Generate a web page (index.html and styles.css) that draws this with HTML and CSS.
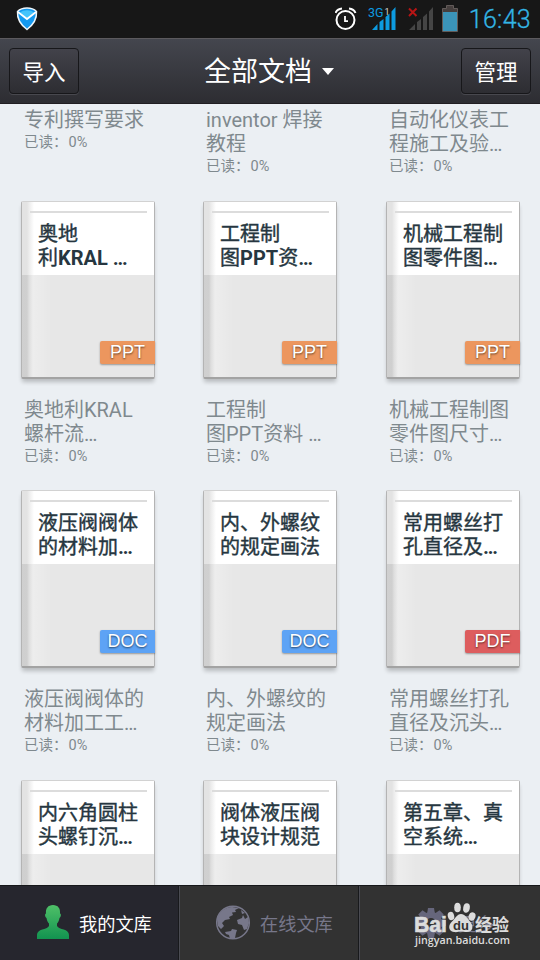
FILE: index.html
```html
<!DOCTYPE html>
<html lang="zh-CN">
<head>
    <meta charset="UTF-8">
    <meta name="viewport" content="width=device-width, initial-scale=1.0">
    <title>全部文档</title>
    <link rel="stylesheet" href="styles.css">
</head>
<body>
    <div class="status-bar">
        <svg class="shield" width="22" height="24" viewBox="0 0 22 24">
            <path d="M11 1 C14 1 18 2 20.5 4.5 C21 12 17 18 11 22.5 C5 18 1 12 1.5 4.5 C4 2 8 1 11 1Z" fill="#1499f0" stroke="#eef6fb" stroke-width="1.5"/>
            <path d="M4 5.5 C8 2.5 14 2.5 18 5.5 L11 11.5Z" fill="#45c4fb"/>
            <path d="M2 5 L11 12 L20 5" fill="none" stroke="#fff" stroke-width="1.8"/>
        </svg>
        <div class="status-icons">
            <svg width="22" height="24" viewBox="0 0 22 24" fill="none" stroke="#fff">
                <circle cx="10.5" cy="14" r="9" stroke-width="2"/>
                <path d="M0.500 7 C1.500 4.500 4 2.800 7 2.500 M20.500 7 C19.500 4.500 17 2.800 14 2.500" stroke-width="2"/>
                <path d="M10 10 V15.200 H13" stroke-width="1.800"/>
            </svg>
            <svg width="29" height="26" viewBox="0 0 29 26">
                <text x="0" y="11" class="net">3G</text>
                <text x="16.500" y="9" class="sim">1</text>
                <path d="M4 24 L9.500 18 V24Z M11.500 16 L15.500 13 V24 H11.500Z M17.500 11 L21.500 7.500 V24 H17.500Z M23.500 5.500 L27.500 1 V24 H23.500Z" fill="#0d9be0"/>
            </svg>
            <svg width="26" height="26" viewBox="0 0 26 26">
                <path d="M1 24 L7 18 V24Z M9 16 L13 13 V24 H9Z M15 11 L19 7.500 V24 H15Z M21 5.500 L25 1 V24 H21Z" fill="#454545"/>
                <path d="M1 2.500 L8.500 10 M8.500 2.500 L1 10" stroke="#b81414" stroke-width="2"/>
            </svg>
            <svg width="16" height="28" viewBox="0 0 16 28">
                <path d="M4.500 0.500 H11.500 V3.500 H15.500 V26.500 H0.500 V3.500 H4.500Z" fill="#463f3e" stroke="#625b59"/>
                <rect x="1" y="7" width="14" height="19" fill="#3b94b9"/>
            </svg>
            <span class="clock">16:43</span>
        </div>
    </div>

    <header class="header">
        <button class="btn">导入</button>
        <h1>全部文档 <span class="arrow"></span></h1>
        <button class="btn">管理</button>
    </header>

    <main class="shelf">
        <div class="row row-first">
            <div class="item">
                <div class="name">专利撰写要求</div>
                <div class="read">已读：<span>0%</span></div>
            </div>
            <div class="item">
                <div class="name">inventor 焊接<br>教程</div>
                <div class="read">已读：<span>0%</span></div>
            </div>
            <div class="item">
                <div class="name">自动化仪表工<br>程施工及验…</div>
                <div class="read">已读：<span>0%</span></div>
            </div>
        </div>

        <div class="row">
            <div class="item">
                <div class="book">
                    <div class="cover">奥地<br>利<b>KRAL …</b></div>
                    <span class="tag ppt">PPT</span>
                </div>
                <div class="name">奥地利KRAL<br>螺杆流…</div>
                <div class="read">已读：<span>0%</span></div>
            </div>
            <div class="item">
                <div class="book">
                    <div class="cover">工程制<br>图<b>PPT</b>资<b>…</b></div>
                    <span class="tag ppt">PPT</span>
                </div>
                <div class="name">工程制<br>图PPT资料 …</div>
                <div class="read">已读：<span>0%</span></div>
            </div>
            <div class="item">
                <div class="book">
                    <div class="cover">机械工程制<br>图零件图<b>…</b></div>
                    <span class="tag ppt">PPT</span>
                </div>
                <div class="name">机械工程制图<br>零件图尺寸…</div>
                <div class="read">已读：<span>0%</span></div>
            </div>
        </div>

        <div class="row">
            <div class="item">
                <div class="book">
                    <div class="cover">液压阀阀体<br>的材料加<b>…</b></div>
                    <span class="tag doc">DOC</span>
                </div>
                <div class="name">液压阀阀体的<br>材料加工工…</div>
                <div class="read">已读：<span>0%</span></div>
            </div>
            <div class="item">
                <div class="book">
                    <div class="cover">内、外螺纹<br>的规定画法</div>
                    <span class="tag doc">DOC</span>
                </div>
                <div class="name">内、外螺纹的<br>规定画法</div>
                <div class="read">已读：<span>0%</span></div>
            </div>
            <div class="item">
                <div class="book">
                    <div class="cover">常用螺丝打<br>孔直径及<b>…</b></div>
                    <span class="tag pdf">PDF</span>
                </div>
                <div class="name">常用螺丝打孔<br>直径及沉头…</div>
                <div class="read">已读：<span>0%</span></div>
            </div>
        </div>

        <div class="row">
            <div class="item">
                <div class="book">
                    <div class="cover">内六角圆柱<br>头螺钉沉<b>…</b></div>
                </div>
            </div>
            <div class="item">
                <div class="book">
                    <div class="cover">阀体液压阀<br>块设计规范</div>
                </div>
            </div>
            <div class="item">
                <div class="book">
                    <div class="cover">第五章、真<br>空系统<b>…</b></div>
                </div>
            </div>
        </div>
    </main>

    <nav class="tabs">
        <div class="tab active">
            <svg width="34" height="36" viewBox="0 0 34 36">
                <defs>
                    <linearGradient id="green" x1="0" y1="0" x2="0" y2="1">
                        <stop offset="0" stop-color="#4fc068"/>
                        <stop offset="1" stop-color="#129350"/>
                    </linearGradient>
                </defs>
                <path d="M17 0 C22 0 24.500 3.500 24 8.500 C25.500 9 25 12 23.500 13 C23 16 22 17.500 21 18.500 V21 C23 25 33 23.500 33 30 V34 H1 V30 C1 23.500 11 25 13 21 V18.500 C12 17.500 11 16 10.500 13 C9 12 8.500 9 10 8.500 C9.500 3.500 12 0 17 0Z" fill="url(#green)"/>
            </svg>
            <span>我的文库</span>
        </div>
        <div class="tab">
            <svg width="36" height="36" viewBox="0 0 36 36">
                <circle cx="18" cy="17.500" r="16.300" fill="none" stroke="#77778a" stroke-width="1.500"/>
                <path d="M2 14 C4 7 10 2 17 2 L24 3 L20 5 L21 7 L17 7.500 L18 10 L14 12 L15 14 L10 15 L7 18 L9 21 L6 24 L3 21Z M22 15 L27 13 L28 10 L30 14 L33 12 L34 18 L32 24 L29 25 L27 20 L23 19Z M10 27 L16 26 L17 24 L22 25 L21 28 L20 33 L15 34 L14 30 L11 29Z M26 5 L30 8 L27 9Z" fill="#77778a"/>
            </svg>
            <span>在线文库</span>
        </div>
        <div class="tab">
            <svg width="30" height="32" viewBox="-15 -16 30 32">
                <g fill="#66667c">
                    <path id="tooth" d="M-3 -15 H3 L4 -9 H-4Z"/>
                    <use href="#tooth" transform="rotate(45)"/>
                    <use href="#tooth" transform="rotate(90)"/>
                    <use href="#tooth" transform="rotate(135)"/>
                    <use href="#tooth" transform="rotate(180)"/>
                    <use href="#tooth" transform="rotate(225)"/>
                    <use href="#tooth" transform="rotate(270)"/>
                    <use href="#tooth" transform="rotate(315)"/>
                </g>
                <circle r="8" fill="none" stroke="#66667c" stroke-width="6"/>
            </svg>
            <span>更多</span>
        </div>
    </nav>

    <svg class="watermark" width="110" height="52" viewBox="0 0 110 52">
        <g fill="#dcdcdc">
            <text x="6" y="34" class="wm-logo" textLength="33" lengthAdjust="spacingAndGlyphs">Bai</text>
            <ellipse cx="43" cy="18" rx="3.200" ry="4.200" transform="rotate(-15 43 18)"/>
            <ellipse cx="49.500" cy="9.500" rx="3.300" ry="4.800"/>
            <ellipse cx="58.500" cy="10" rx="3.300" ry="4.700" transform="rotate(10 58.500 10)"/>
            <ellipse cx="64" cy="18.500" rx="3.400" ry="4.200" transform="rotate(20 64 18.500)"/>
            <path d="M53 16 C57 16 59 20 62 23.500 C66 28 65 34 59 34 C56 34 55 33.500 53 33.500 C51 33.500 49 34.500 46 34 C40 33 40 27 44 23.500 C47 21 49 16 53 16Z"/>
            <text x="45" y="32" class="wm-du">du</text>
            <text x="67" y="33" class="wm-cn" textLength="34" lengthAdjust="spacingAndGlyphs">经验</text>
            <text x="7" y="46" class="wm-url" textLength="95" lengthAdjust="spacingAndGlyphs">jingyan.baidu.com</text>
        </g>
    </svg>
</body>
</html>
```

FILE: styles.css
```css
* {
    box-sizing: border-box;
}
body {
    margin: 0;
    width: 540px;
    height: 960px;
    display: flex;
    flex-direction: column;
    overflow: hidden;
    font-family: Roboto, "Noto Sans CJK SC", sans-serif;
    background: #ebeff3;
}

/* status bar */
.status-bar {
    height: 38px;
    flex: none;
    display: flex;
    justify-content: space-between;
    padding: 0 9px 0 16px;
    background: #171717;
}
.shield {
    margin-top: 7px;
}
.status-icons {
    display: flex;
    align-items: flex-start;
}
.status-icons svg {
    margin: 6px 11px 0 0;
}
.status-icons svg:nth-child(3) {
    margin-right: 8px;
}
.status-icons svg:nth-child(4) {
    margin-top: 5px;
}
.net {
    font-size: 12.5px;
    fill: #0d9be0;
}
.sim {
    font-size: 9px;
    fill: #ddd;
}
.clock {
    font-size: 25px;
    font-weight: 300;
    line-height: 40px;
    letter-spacing: 0.3px;
    color: #33b5e5;
    -webkit-text-stroke: 0.3px #33b5e5;
}

/* header */
.header {
    height: 66px;
    flex: none;
    display: flex;
    justify-content: space-between;
    align-items: center;
    padding: 0 9px;
    border-top: 1px solid #5c5a5e;
    border-bottom: 1px solid #211e22;
    background: linear-gradient(#44464e, #2d2d32);
}
.header h1 {
    margin: 0;
    padding: 2px 2px 0 0;
    font-size: 27px;
    line-height: 40px;
    font-weight: normal;
    color: #fff;
    display: flex;
    align-items: center;
}
.arrow {
    margin: -2px 0 0 10px;
    border: 6.5px solid transparent;
    border-top: 7px solid #fff;
    border-bottom: none;
}
.btn {
    width: 70px;
    height: 46px;
    padding: 0 0 1px;
    border: 1px solid #17171a;
    border-radius: 4px;
    background: linear-gradient(#42424a, #2d2d32);
    box-shadow: 0 1px 0 #48484e;
    font-family: inherit;
    font-size: 21.5px;
    color: #fff;
}

/* documents */
.shelf {
    flex: 1;
    overflow: hidden;
    padding-left: 21px;
}
.row {
    display: grid;
    grid-template-columns: 182px 183px 134px;
    height: 289.4px;
}
.row-first {
    height: 97px;
    padding-top: 4px;
}
.row-first .name {
    margin-top: 0;
}
.book {
    position: relative;
    width: 134px;
    height: 178px;
    border: 1px solid #b4b4b4;
    border-top-color: #d2d2d2;
    border-bottom: 2px solid #a3a3a3;
    border-radius: 2px;
    background: linear-gradient(90deg, rgba(0, 0, 0, 0.1) 5px, rgba(0, 0, 0, 0.04) 7px, rgba(255, 255, 255, 0.25) 11px, transparent 30px), #e7e7e7;
    box-shadow: 0 4px 4px -1px rgba(0, 0, 0, 0.22);
}
.cover {
    position: relative;
    height: 73px;
    padding: 20px 0 0 16px;
    font-size: 20px;
    line-height: 24px;
    white-space: nowrap;
    color: #263640;
    -webkit-text-stroke: 0.4px #263640;
    background: linear-gradient(90deg, #e3e3e3 5px, #ececec 7px, #fff 12px);
}
.cover b {
    -webkit-text-stroke: 0;
}
.cover::before {
    content: "";
    position: absolute;
    left: 8px;
    right: 7px;
    top: 9px;
    height: 2px;
    background: #dcdcdc;
}
.tag {
    position: absolute;
    right: -1px;
    bottom: 13px;
    width: 55px;
    height: 23px;
    border-radius: 2px 0 0 2px;
    font-family: "Liberation Sans", sans-serif;
    font-size: 18px;
    line-height: 23px;
    text-align: center;
    color: #fff;
    text-shadow: 0 1px 2px rgba(0, 0, 0, 0.6);
    box-shadow: 0 1px 2px rgba(0, 0, 0, 0.35);
}
.ppt { background: #ec965e; }
.doc { background: #5da3f5; }
.pdf { background: #dd5d5e; }
.name {
    margin: 19px 0 0 3px;
    font-size: 20px;
    line-height: 24px;
    white-space: nowrap;
    color: #7f898e;
}
.read {
    margin-left: 3px;
    font-size: 14.5px;
    line-height: 21px;
    color: #7f898e;
}
.read span {
    margin-left: 1px;
}

/* bottom tabs */
.tabs {
    height: 75px;
    flex: none;
    display: grid;
    grid-template-columns: 179px 180px 181px;
    border-top: 1px solid #16171a;
}
.tab {
    display: flex;
    align-items: center;
    gap: 9px;
    padding-left: 35px;
    font-size: 18.2px;
    color: #77778a;
    background: #323232;
    border-left: 1px solid #4a4b52;
    border-right: 1px solid #18191c;
}
.tab.active {
    padding-left: 36px;
    color: #fff;
    background: #26262e;
    border-left: none;
}
.tab:last-child {
    padding-left: 56px;
    gap: 12px;
    border-right: none;
}

.watermark {
    position: absolute;
    left: 408px;
    top: 898px;
}
.wm-logo {
    font: bold 22px "Liberation Sans", sans-serif;
    stroke: #dcdcdc;
    stroke-width: 0.6px;
}
.wm-du {
    font: bold 13px "Liberation Sans", sans-serif;
    fill: #323232;
}
.wm-cn {
    font: bold 17px "Noto Sans CJK SC", sans-serif;
}
.wm-url {
    font: 600 11px "Open Sans", sans-serif;
}
```
